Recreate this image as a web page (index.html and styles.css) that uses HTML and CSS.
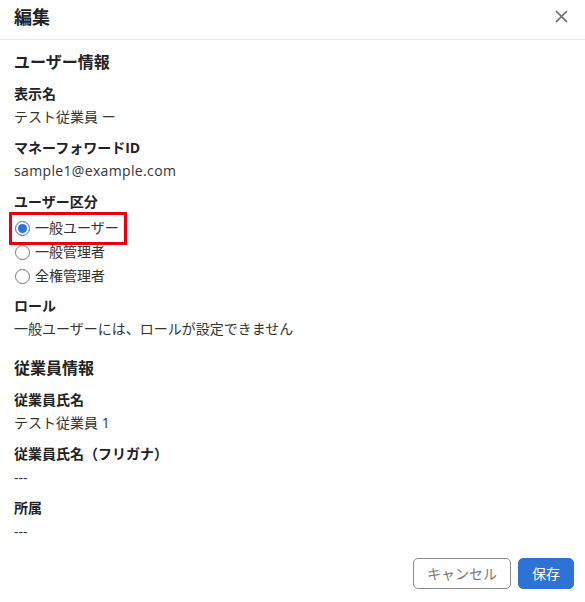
FILE: index.html
```html
<!DOCTYPE html>
<html lang="ja">
<head>
<meta charset="utf-8">
<link rel="stylesheet" href="styles.css">
</head>
<body>
<div class="modal">
  <header class="modal-header">
    <h1 class="modal-title">編集</h1>
    <button class="close" aria-label="閉じる">
      <svg width="13" height="13" viewBox="0 0 13 13"><path d="M1 1 L12 12 M12 1 L1 12" stroke="#6b6b6b" stroke-width="1.7" fill="none"/></svg>
    </button>
  </header>
  <main class="modal-body">
    <section class="section">
      <h2 class="section-title">ユーザー情報</h2>
      <div class="field">
        <div class="label">表示名</div>
        <div class="value">テスト従業員 ー</div>
      </div>
      <div class="field">
        <div class="label">マネーフォワードID</div>
        <div class="value latin">sample1@example.com</div>
      </div>
      <div class="field choices">
        <div class="label">ユーザー区分</div>
        <div class="radios">
          <label class="radio highlight"><input type="radio" name="kind" checked><span>一般ユーザー</span></label>
          <label class="radio"><input type="radio" name="kind"><span>一般管理者</span></label>
          <label class="radio"><input type="radio" name="kind"><span>全権管理者</span></label>
        </div>
      </div>
      <div class="field">
        <div class="label">ロール</div>
        <div class="value">一般ユーザーには、ロールが設定できません</div>
      </div>
    </section>
    <section class="section">
      <h2 class="section-title">従業員情報</h2>
      <div class="field">
        <div class="label">従業員氏名</div>
        <div class="value">テスト従業員 1</div>
      </div>
      <div class="field">
        <div class="label">従業員氏名（フリガナ）</div>
        <div class="value dash">---</div>
      </div>
      <div class="field">
        <div class="label">所属</div>
        <div class="value dash">---</div>
      </div>
    </section>
  </main>
  <footer class="modal-footer">
    <button class="btn btn-secondary">キャンセル</button>
    <button class="btn btn-primary">保存</button>
  </footer>
</div>
</body>
</html>
```
FILE: styles.css
```css
* { box-sizing: border-box; }
html, body { margin: 0; padding: 0; background: #fff; }
body {
  font-family: "Open Sans", "Noto Sans CJK JP", sans-serif;
  color: #333;
  font-size: 14px;
}
.modal { width: 585px; }
.modal-header {
  height: 40px;
  border-bottom: 1px solid #e6e6e6;
  display: flex;
  align-items: center;
  justify-content: space-between;
  padding: 0 17px 6px 14px;
}
.modal-title {
  margin: 0;
  font-size: 18px;
  font-weight: 700;
  line-height: 24px;
  color: #222;
}
.close {
  border: 0;
  background: none;
  padding: 0;
  width: 13px;
  height: 13px;
  display: flex;
}
.modal-body { padding: 10px 14px 0; }
.section + .section { margin-top: 16px; }
.section-title {
  margin: 0 0 8px;
  font-size: 16px;
  font-weight: 700;
  line-height: 24px;
  color: #222;
}
.field + .field { margin-top: 8px; }
.field.choices + .field { margin-top: 6px; }
.label {
  font-weight: 700;
  line-height: 23px;
  color: #222;
}
.value { line-height: 23px; }
.value.latin { letter-spacing: 0.35px; }
.value.dash { padding-top: 3px; line-height: 20px; }
.radios { display: flex; flex-direction: column; align-items: flex-start; margin-top: 3px; }
.radio {
  display: inline-flex;
  align-items: center;
  height: 24px;
  line-height: 24px;
}
.radio input {
  margin: 0 5px 0 1px;
  width: 15px;
  height: 15px;
  accent-color: #2f6fd8;
}
.radio.highlight {
  outline: 3px solid #e8000e;
  outline-offset: 0;
  margin-left: -2px;
  padding-left: 2px;
  padding-right: 5px;
  height: 27px;
  margin-top: -1px;
  margin-bottom: -2px;
  padding-bottom: 1px;
}
.modal-footer {
  display: flex;
  justify-content: flex-end;
  gap: 7px;
  padding: 16px 11px 0 0;
}
.btn {
  font-family: inherit;
  font-size: 14px;
  height: 31px;
  border-radius: 5px;
  padding: 0 13px;
  line-height: 29px;
  cursor: pointer;
}
.btn-secondary {
  background: #fff;
  border: 1px solid #8a8a8a;
  color: #777;
}
.btn-primary {
  background: #2f72d6;
  border: 1px solid #2f72d6;
  color: #fff;
  padding: 0 13px;
}
```
